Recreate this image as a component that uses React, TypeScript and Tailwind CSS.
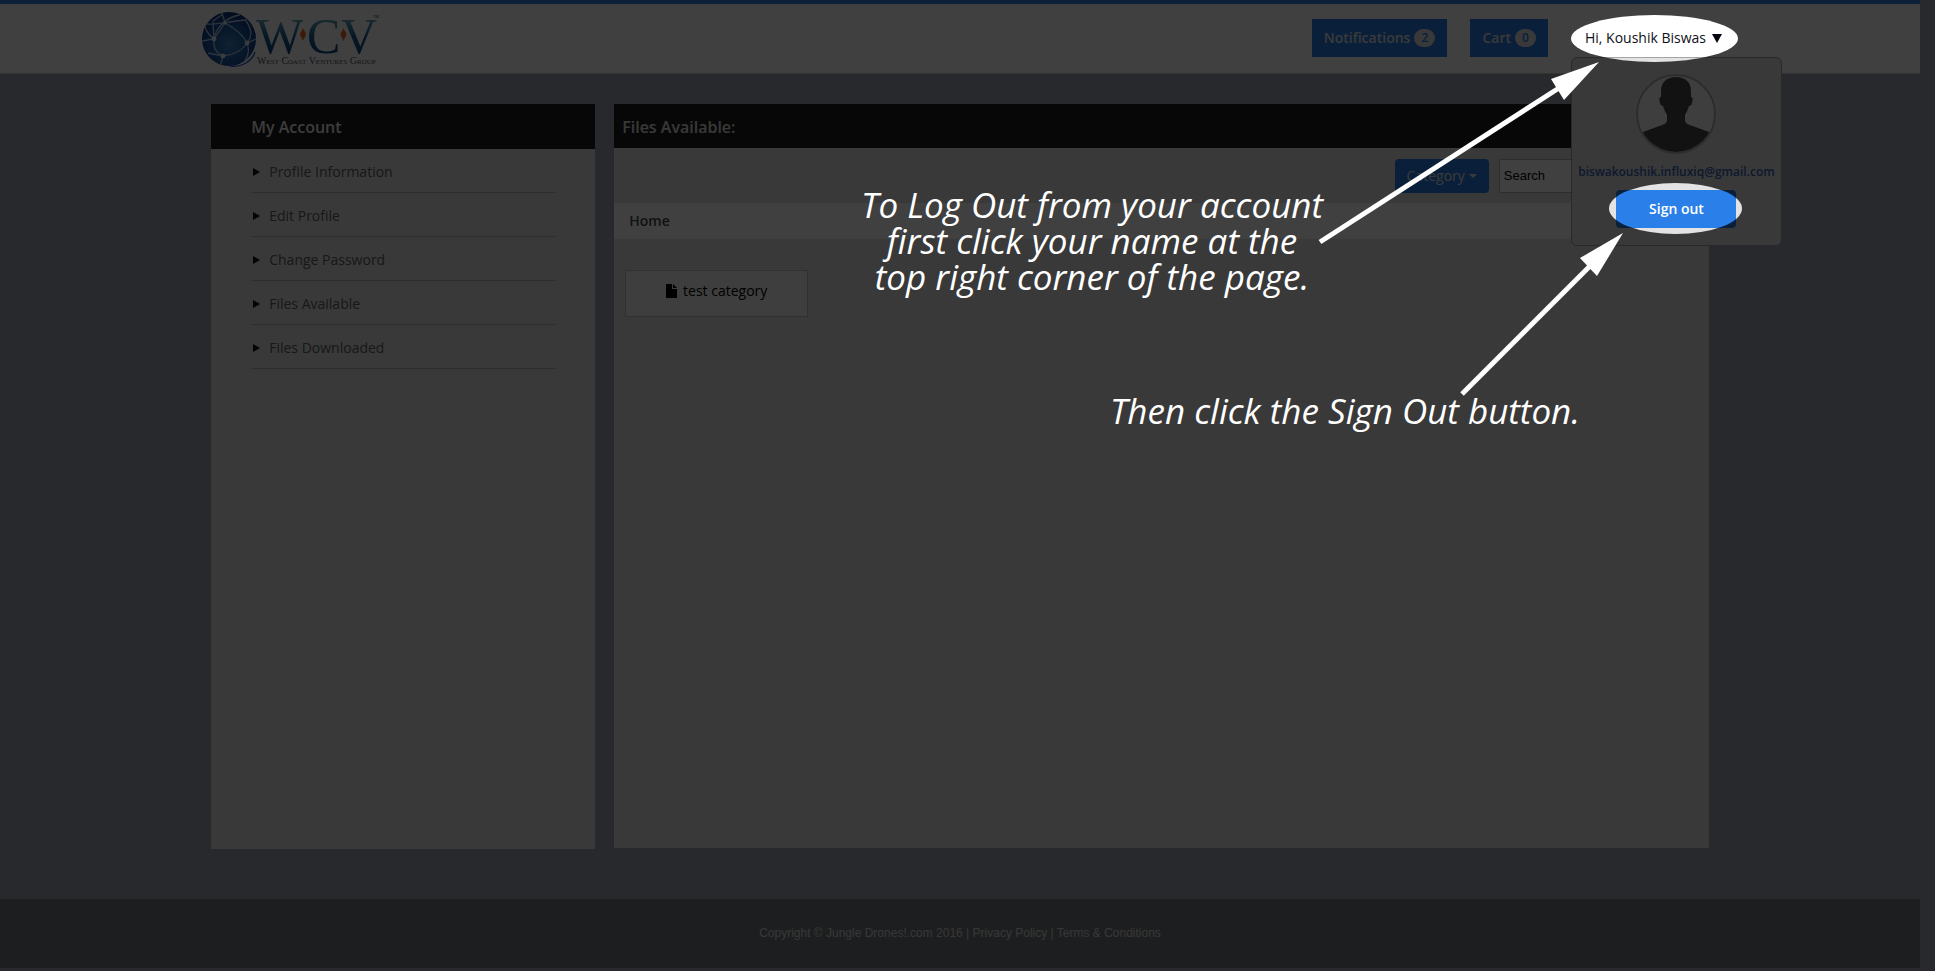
import React from 'react';

const menuItems = [
  'Profile Information',
  'Edit Profile',
  'Change Password',
  'Files Available',
  'Files Downloaded',
];

function Logo() {
  return (
    <svg viewBox="0 0 182 58" className="block h-[58px] w-[182px] overflow-visible" role="img" aria-label="West Coast Ventures Group">
      <defs>
        <radialGradient id="globe" cx="0.5" cy="0.6" r="0.6">
          <stop offset="0" stopColor="#3a86c4" />
          <stop offset="0.55" stopColor="#1a5aa2" />
          <stop offset="1" stopColor="#0a2f78" />
        </radialGradient>
        <linearGradient id="ink" x1="0" y1="9" x2="0" y2="44" gradientUnits="userSpaceOnUse">
          <stop offset="0" stopColor="#5fa0ba" />
          <stop offset="0.45" stopColor="#1c648e" />
          <stop offset="1" stopColor="#0a3f80" />
        </linearGradient>
        <clipPath id="globeClip">
          <circle cx="29" cy="28" r="27" />
        </clipPath>
      </defs>
      <circle cx="29" cy="28" r="27" fill="url(#globe)" />
      <g clipPath="url(#globeClip)" fill="none" stroke="#b4cbec" strokeWidth="1.3">
        <path d="M14 28C16 16 27 6 40 4" />
        <path d="M14 28C6 22 4 15 6 13C18 14 30 10 47 9" />
        <path d="M14 28C13 36 16 42 23 45C33 44 42 40 47 32" />
        <path d="M25 12C36 18 43 24 47 32C52 26 52 18 46 10" />
        <path d="M25 12L14 28L2 30" />
        <path d="M47 32L56 28M47 32C50 40 48 46 42 54M23 45L20 56M23 45L8 42" />
        <path d="M13 10L23 3M13 10L14 28M25 12L22 2" />
      </g>
      <g fill="#e8f2ff">
        <circle cx="14" cy="28" r="2.4" />
        <circle cx="47" cy="32" r="2.4" />
        <circle cx="23" cy="45" r="2.4" />
        <circle cx="25" cy="12" r="1.6" />
      </g>
      <path d="M30 55C40 57 52 51 55 41" fill="none" stroke="#2c5fd0" strokeWidth="1.4" />
      <g fill="url(#ink)" fontFamily="'Liberation Serif', serif" fontSize="50">
        <text x="56" y="42">W</text>
        <text x="107" y="42">C</text>
        <text x="141" y="42">V</text>
      </g>
      <path d="M103 17C104 20 106 22 106 23C106 25 104 27 103 30C102 27 100 25 100 23C100 22 102 20 103 17Z" fill="#f0672a" />
      <path d="M143.500 17C144.500 20 146.500 22 146.500 23C146.500 25 144.500 27 143.500 30C142.500 27 140.500 25 140.500 23C140.500 22 142.500 20 143.500 17Z" fill="#f0672a" />
      <text x="57" y="53" fontFamily="'Liberation Serif', serif" fontSize="10" fill="#4a5260" style={{ fontVariant: 'small-caps' }}>
        West Coast Ventures Group
      </text>
      <text x="173" y="7" fontFamily="'Liberation Sans', sans-serif" fontSize="4" fill="#333b48">TM</text>
    </svg>
  );
}

function Avatar() {
  return (
    <svg viewBox="0 0 80 80" className="size-20" role="img" aria-label="Profile picture">
      <defs>
        <clipPath id="avatarClip">
          <circle cx="40" cy="40" r="38" />
        </clipPath>
      </defs>
      <circle cx="40" cy="40" r="39" fill="#f6f6f6" stroke="#b0b0b0" strokeWidth="2" />
      <g clipPath="url(#avatarClip)">
        <path
          d="M40 3C31 3 25 8 25 17V23C23 23 23 26 24 29C24 31 26 32 27 32C28 36 30 39 31 41V46C31 49 29 50 26 51L7 58V80H73V58L54 51C51 50 49 49 49 46V41C50 39 52 36 53 32C54 32 56 31 56 29C57 26 57 23 55 23V17C55 8 49 3 40 3Z"
          fill="#4a4a4a"
        />
      </g>
    </svg>
  );
}

function TopButton({ label, count }: { label: string; count: number }) {
  return (
    <button className="flex h-[38px] items-center gap-1 bg-[#2b7de6] px-3 text-sm font-semibold text-[#e4e4e4]">
      {label}
      <span className="flex h-[18px] min-w-[21px] items-center justify-center rounded-full bg-[#e4e4e4] px-1 text-xs font-semibold text-[#2b7de6]">
        {count}
      </span>
    </button>
  );
}

function AccountMenu() {
  return (
    <div className="absolute top-[38px] left-0 z-10 flex w-[211px] flex-col items-center rounded-md border border-[#a4a4a4] bg-[#e3e3e3] pt-4 pb-[17px]">
      <Avatar />
      <a href="#account" className="mt-2 text-xs leading-5 font-semibold text-[#3563b8]">
        biswakoushik.influxiq@gmail.com
      </a>
      <button className="mt-2 h-[38px] w-[120px] rounded bg-[#2b7fe8] text-sm font-semibold text-white">Sign out</button>
    </div>
  );
}

function Header() {
  return (
    <header className="mr-[15px] border-t-4 border-b border-t-[#3080e8] border-b-[#d0d0d0] bg-white">
      <div className="mx-auto flex h-[69px] w-[80%] items-start justify-between pr-[6px] pl-2">
        <a href="#home" className="mt-[7px]">
          <Logo />
        </a>
        <div className="flex pt-[15px]">
          <div className="flex gap-[23px]">
            <TopButton label="Notifications" count={2} />
            <TopButton label="Cart" count={0} />
          </div>
          <div className="relative ml-[23px]">
            <button className="flex h-[38px] items-center gap-[6px] pl-[14px] text-sm whitespace-nowrap text-[#101018]">
              Hi, Koushik Biswas
              <svg viewBox="0 0 10 9" className="h-[9px] w-[10px]" aria-hidden="true">
                <path d="M0 0H10L5 9Z" fill="#050510" />
              </svg>
            </button>
            <AccountMenu />
          </div>
        </div>
      </div>
    </header>
  );
}

function Sidebar() {
  return (
    <aside className="h-[745px] w-[384px] shrink-0 bg-[#e3e3e3]">
      <h2 className="flex h-[45px] items-center bg-[#1c1c1c] pl-10 text-base font-semibold text-[#f0f0f0]">My Account</h2>
      <nav className="pr-10 pl-10">
        <ul>
          {menuItems.map((item) => (
            <li key={item} className="flex h-11 items-center border-b border-[#b4b4b4] pt-[3px]">
              <a href="#menu" className="flex items-center gap-[9px] pl-[2px] text-sm text-[#606060]">
                <svg viewBox="0 0 7 8" className="h-2 w-[7px]" aria-hidden="true">
                  <path d="M0 0L7 4L0 8Z" fill="#111" />
                </svg>
                {item}
              </a>
            </li>
          ))}
        </ul>
      </nav>
    </aside>
  );
}

function FilesPanel() {
  return (
    <section className="h-[744px] flex-1 bg-[#e3e3e3]">
      <h2 className="flex h-11 items-center bg-[#1c1c1c] pt-[2px] pl-2 text-base font-semibold text-[#e0e0e0]">Files Available:</h2>
      <div className="flex h-[55px] items-center justify-end gap-[10px] pr-[10px]">
        <button className="flex h-[34px] items-center gap-1 rounded bg-[#2b7de6] px-3 text-sm text-[#e8e8e8]">
          Category
          <svg viewBox="0 0 8 4" className="h-1 w-2" aria-hidden="true">
            <path d="M0 0H8L4 4Z" fill="#e8e8e8" />
          </svg>
        </button>
        <input
          type="text"
          aria-label="Search"
          defaultValue="Search"
          className="h-[34px] w-[200px] border border-[#b4b4b4] bg-white px-1 font-['Liberation_Sans',Arial,sans-serif] text-[13px] text-black"
        />
      </div>
      <div className="flex h-9 items-center bg-white pl-[15px]">
        <a href="#home" className="text-sm font-semibold text-[#444]">Home</a>
      </div>
      <div className="px-[11px] pt-[31px]">
        <a href="#category" className="flex h-[47px] w-[183px] items-center justify-center gap-[6px] border border-[#c4c4c4] bg-[#f6f6f6] pb-[5px] text-sm text-black">
          <svg viewBox="0 0 11 14" className="h-[14px] w-[11px]" aria-hidden="true">
            <path d="M0 0H6V5H11V14H0ZM7 0L11 4H7Z" fill="#000" />
          </svg>
          test category
        </a>
      </div>
    </section>
  );
}

function Walkthrough() {
  return (
    <div className="pointer-events-none absolute inset-0 z-20 overflow-hidden">
      <svg className="absolute inset-0 h-full w-full" aria-hidden="true">
        <defs>
          <mask id="spotlights">
            <rect width="100%" height="100%" fill="#fff" />
            <ellipse cx="1654.500" cy="38.500" rx="83.500" ry="23.500" fill="#000" />
            <ellipse cx="1675.500" cy="208.500" rx="66.500" ry="25.500" fill="#000" />
          </mask>
        </defs>
        <rect width="100%" height="100%" fill="#000" fillOpacity="0.75" mask="url(#spotlights)" />
        <g stroke="#fff" strokeWidth="5">
          <path d="M1320 242L1559 88" />
          <path d="M1462 394L1591 265" />
        </g>
        <g fill="#fff">
          <path d="M1599 62L1551 79L1564 100Z" />
          <path d="M1623 233L1580 258L1597 276Z" />
        </g>
      </svg>
      <p className="absolute top-[187px] left-[842px] w-[500px] text-center font-['Segoe_Print','Open_Sans',cursive] text-[35px] leading-9 text-white italic">
        To Log Out from your account
        <br />
        first click your name at the
        <br />
        top right corner of the page.
      </p>
      <p className="absolute top-[393px] left-[1095px] w-[500px] text-center font-['Segoe_Print','Open_Sans',cursive] text-[35px] leading-9 text-white italic">
        Then click the Sign Out button.
      </p>
    </div>
  );
}

export default function App() {
  return (
    <div className="relative min-h-screen bg-[#9fa3b1] font-['Open_Sans',sans-serif]">
      <Header />
      <main className="mr-[15px] pt-[30px] pb-[50px]">
        <div className="mx-auto flex w-[78%] items-start gap-[19px]">
          <Sidebar />
          <FilesPanel />
        </div>
      </main>
      <footer className="mr-[15px] flex h-[69px] items-center justify-center bg-[#747a7c] pb-[2px] font-['Liberation_Sans',Arial,sans-serif] text-xs text-[#dcdcdc]">
        <p>
          Copyright © Jungle Drones!.com 2016 | <a href="#privacy">Privacy Policy</a> | <a href="#terms">Terms &amp; Conditions</a>
        </p>
      </footer>
      <Walkthrough />
    </div>
  );
}
